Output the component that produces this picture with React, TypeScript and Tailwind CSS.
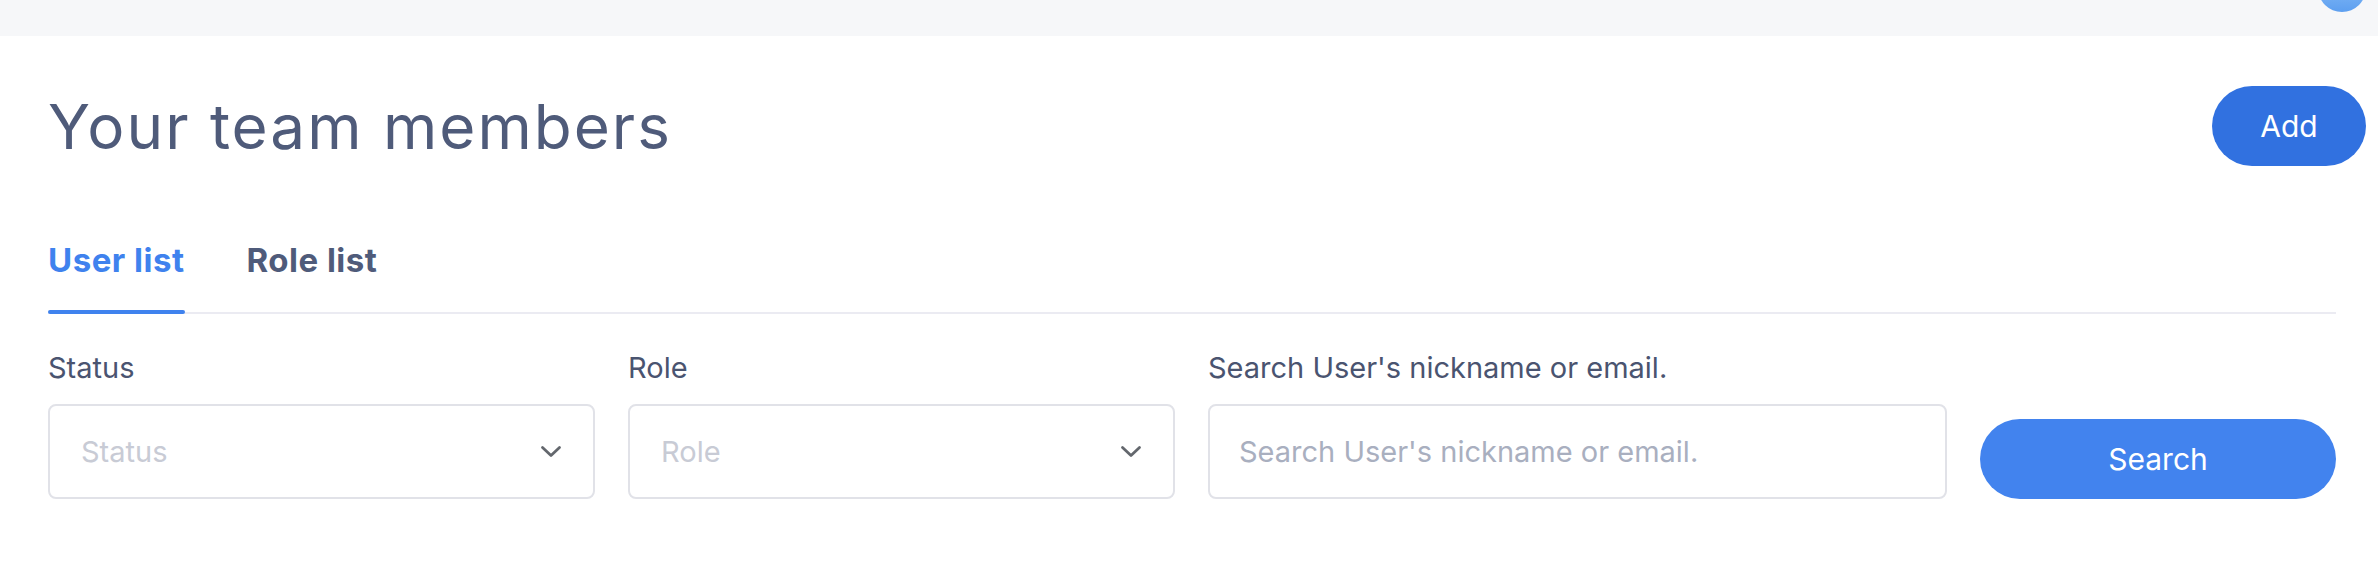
import { useState } from "react";

function Chevron() {
  return (
    <svg width="22" height="13" viewBox="0 0 22 13" fill="none" className="shrink-0">
      <path d="M2.5 2.5l8.5 8 8.5-8" stroke="#63676d" strokeWidth="2.8" strokeLinecap="round" strokeLinejoin="round" />
    </svg>
  );
}

function SelectBox({ label }: { label: string }) {
  return (
    <div className="flex w-[547px] shrink-0 flex-col">
      <span className="text-[29px] leading-[40px] text-[#4a5470]">{label}</span>
      <div className="mt-[16px] flex h-[95px] items-center justify-between rounded-[8px] border-2 border-[#e1e2e8] pl-[31px] pr-[31px]">
        <span className="text-[29px] text-[#c8cbd5]">{label}</span>
        <Chevron />
      </div>
    </div>
  );
}

export default function App() {
  const [tab, setTab] = useState("user");
  const tabs = [
    { id: "user", name: "User list" },
    { id: "role", name: "Role list" },
  ];

  return (
    <div className="min-h-[562px] bg-white font-['Inter',sans-serif]">
      <div className="flex h-[36px] justify-end overflow-hidden bg-[#f6f7f9] pr-[12px]">
        <div className="-mt-[36px] h-[48px] w-[48px] rounded-full bg-gradient-to-b from-[#9ccaf8] to-[#5d9ff0]" />
      </div>

      <div className="pl-[48px] pr-[12px]">
        <div className="mt-[50px] flex h-[80px] items-center justify-between">
          <h1 className="text-[62px] font-normal tracking-[2px] text-[#4f5b7a]">Your team members</h1>
          <button className="h-[80px] w-[154px] rounded-full bg-[#3171e0] text-[30px] text-white">Add</button>
        </div>

        <div className="pr-[30px]">
          <div className="mt-[74px] flex gap-[62px] border-b-2 border-[#ebebf2]">
            {tabs.map((t) => (
              <button key={t.id} onClick={() => setTab(t.id)} className="flex flex-col items-stretch">
                <span className={"text-[33px] font-bold leading-[40px] tracking-[0.5px] " + (tab === t.id ? "text-[#3f82ee]" : "text-[#4f5b7a]")}>
                  {t.name}
                </span>
                <span className={"-mb-[2px] mt-[30px] h-[4px] rounded-full " + (tab === t.id ? "bg-[#3f82ee]" : "bg-transparent")} />
              </button>
            ))}
          </div>

          <div className="mt-[34px] flex items-end gap-[33px]">
            <SelectBox label="Status" />
            <SelectBox label="Role" />
            <div className="flex w-[739px] shrink-0 flex-col">
              <span className="text-[29px] leading-[40px] text-[#4a5470]">Search User's nickname or email.</span>
              <input
                placeholder="Search User's nickname or email."
                className="mt-[16px] h-[95px] rounded-[8px] border-2 border-[#e1e2e8] px-[29px] text-[29px] outline-none placeholder:text-[#a9afbf]"
              />
            </div>
            <button className="h-[80px] flex-1 rounded-full bg-[#4283ee] text-[30px] text-white">Search</button>
          </div>
        </div>
      </div>
    </div>
  );
}
